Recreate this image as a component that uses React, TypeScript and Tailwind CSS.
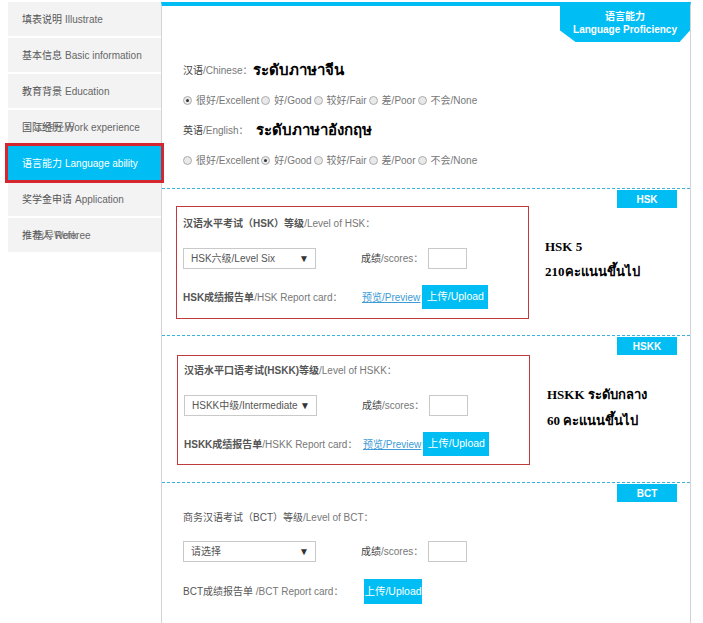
import React from "react";

const sideItems = [
  { zh: "填表说明", en: "Illustrate" },
  { zh: "基本信息", en: "Basic information" },
  { zh: "教育背景", en: "Education" },
  { zh: "国际经历", en: "Work experience", ghost: "工作经历" },
  { zh: "语言能力", en: "Language ability", active: true },
  { zh: "奖学金申请", en: "Application" },
  { zh: "推荐人", en: "Referee", ghost: "指导Work" },
];

const levels = ["很好/Excellent", "好/Good", "较好/Fair", "差/Poor", "不会/None"];

function Radio({ checked }: { checked?: boolean }) {
  return (
    <span className="inline-flex w-[9px] h-[9px] shrink-0 rounded-full border border-[#acacac] bg-[#e9e9e9] items-center justify-center">
      {checked && <span className="w-[3px] h-[3px] rounded-full bg-[#333]" />}
    </span>
  );
}

function LevelRow({ picked }: { picked: number }) {
  return (
    <div className="h-[30px] flex items-center text-[10px] text-[#777]">
      {levels.map((l, i) => (
        <span key={l} className="inline-flex items-center">
          <Radio checked={i === picked} />
          <span className="ml-[4px] mr-[2px]">{l}</span>
        </span>
      ))}
    </div>
  );
}

function Badge({ text }: { text: string }) {
  return (
    <div className="absolute top-[1px] right-[13px] w-[60px] h-[18px] bg-[#00bef4] text-white text-[10px] font-bold flex items-center justify-center">
      {text}
    </div>
  );
}

function Select({ text }: { text: string }) {
  return (
    <div className="w-[133px] h-[21px] border border-[#c9c9c9] bg-white flex items-center justify-between pl-[7px] pr-[6px] text-[10px] text-[#555]">
      <span>{text}</span>
      <span className="text-[10px] text-[#333]">▼</span>
    </div>
  );
}

function ScoreRow({ select }: { select: string }) {
  return (
    <div className="h-[21px] flex items-center">
      <Select text={select} />
      <span className="ml-[45px] w-[67px] text-[10px] text-[#777]">
        <span className="text-[#444]">成绩</span>/scores：
      </span>
      <div className="w-[39px] h-[21px] border border-[#c9c9c9] bg-white" />
    </div>
  );
}

function UploadBtn({ w }: { w: string }) {
  return (
    <div className={`${w} bg-[#00bef4] text-white text-[10.5px] flex items-center justify-center`}>上传/Upload</div>
  );
}

function ExamBox({
  title,
  select,
  report,
  pad,
}: {
  title: React.ReactNode;
  select: string;
  report: React.ReactNode;
  pad: string;
}) {
  return (
    <div className={`w-[353px] border border-[#bf3b40] pl-[6px] ${pad}`}>
      <div className="h-[20px] flex items-center text-[10px] text-[#777]">{title}</div>
      <div className="mt-[15px]">
        <ScoreRow select={select} />
      </div>
      <div className="mt-[16px] h-[24px] flex items-center">
        <span className="w-[179px] text-[10px] text-[#777]">{report}</span>
        <span className="text-[10px] text-[#3d9bd6] underline">预览/Preview</span>
        <span className="ml-[2px] h-[24px] flex">
          <UploadBtn w="w-[66px] h-[24px]" />
        </span>
      </div>
    </div>
  );
}

export default function App() {
  return (
    <div className="w-[703px] h-[623px] overflow-hidden bg-white pt-[2px] pl-[8px] flex items-start font-['Liberation_Sans','Noto_Sans_CJK_SC',sans-serif]">
      {/* sidebar */}
      <div className="w-[153px] flex flex-col gap-[2px] shrink-0">
        {sideItems.map((it) => (
          <div
            key={it.en}
            className={
              it.active
                ? "h-[34px] flex items-center pl-[14px] bg-[#00bef4] text-white text-[10px] outline outline-[3px] outline-[#d5262f] relative z-10"
                : "h-[34px] flex items-center pl-[14px] bg-[#f3f3f3] text-[10px] text-[#666] relative"
            }
          >
            <span className={it.active ? "" : "text-[#555]"}>{it.zh}</span>
            <span className="ml-[3px]">{it.en}</span>
            {it.ghost && (
              <span className="absolute left-[26px] top-[10px] text-[10px] text-[#666] opacity-80">{it.ghost}</span>
            )}
          </div>
        ))}
      </div>

      {/* main panel */}
      <div className="w-[530px] shrink-0 border-l border-r border-[#d3d3d3] border-t-4 border-t-[#00bef4] pb-[60px]">
        {/* section 1 */}
        <div className="h-[182px]">
          <div className="flex justify-end">
            <div className="w-[130px] h-[36px] bg-[#00bef4] text-white font-bold text-[10px] leading-[13px] flex flex-col items-center justify-center pb-[3px] [clip-path:polygon(0_0,100%_0,100%_68%,92%_100%,12%_100%,0_68%)]">
              <span>语言能力</span>
              <span>Language Proficiency</span>
            </div>
          </div>
          <div className="pl-[21px] mt-[13px]">
            <div className="h-[30px] flex items-center">
              <span className="text-[10px] text-[#777]">
                <span className="text-[#444]">汉语</span>/Chinese：
              </span>
              <span className="ml-[1px] text-[15px] font-bold text-black font-['Liberation_Serif',serif]">ระดับภาษาจีน</span>
            </div>
            <LevelRow picked={0} />
            <div className="h-[30px] flex items-center">
              <span className="text-[10px] text-[#777]">
                <span className="text-[#444]">英语</span>/English：
              </span>
              <span className="ml-[7px] text-[15px] font-bold text-black font-['Liberation_Serif',serif]">ระดับภาษาอังกฤษ</span>
            </div>
            <LevelRow picked={1} />
          </div>
        </div>

        {/* HSK */}
        <div className="relative h-[147px] border-t border-dashed border-[#3ab2dc] flex items-start">
          <Badge text="HSK" />
          <div className="mt-[17px] ml-[14px]">
            <ExamBox
              pad="pt-[6px] pb-[9px]"
              select="HSK六级/Level Six"
              title={
                <>
                  <span className="font-bold text-[#555]">汉语水平考试（HSK）等级</span>/Level of HSK：
                </>
              }
              report={
                <>
                  <span className="font-bold text-[#555]">HSK成绩报告单</span>/HSK Report card：
                </>
              }
            />
          </div>
          <div className="ml-[16px] mt-[45px] text-[13px] leading-[25px] font-bold text-black font-['Liberation_Serif',serif]">
            <div>HSK 5</div>
            <div>210คะแนนขึ้นไป</div>
          </div>
        </div>

        {/* HSKK */}
        <div className="relative h-[147px] border-t border-dashed border-[#3ab2dc] flex items-start">
          <Badge text="HSKK" />
          <div className="mt-[19px] ml-[15px]">
            <ExamBox
              pad="pt-[4px] pb-[8px]"
              select="HSKK中级/Intermediate"
              title={
                <>
                  <span className="font-bold text-[#555]">汉语水平口语考试(HSKK)等级</span>/Level of HSKK：
                </>
              }
              report={
                <>
                  <span className="font-bold text-[#555]">HSKK成绩报告单</span>/HSKK Report card：
                </>
              }
            />
          </div>
          <div className="ml-[17px] mt-[46px] text-[13px] leading-[26px] font-bold text-black font-['Liberation_Serif',serif]">
            <div>HSKK ระดับกลาง</div>
            <div>60 คะแนนขึ้นไป</div>
          </div>
        </div>

        {/* BCT */}
        <div className="relative border-t border-dashed border-[#3ab2dc] pl-[21px]">
          <Badge text="BCT" />
          <div className="pt-[24px] h-[44px] flex items-end">
            <div className="h-[20px] flex items-center text-[10px] text-[#777]">
              <span className="text-[#555]">商务汉语考试（BCT）等级</span>/Level of BCT：
            </div>
          </div>
          <div className="mt-[14px]">
            <ScoreRow select="请选择" />
          </div>
          <div className="mt-[17px] h-[25px] flex items-center">
            <span className="w-[181px] text-[10px] text-[#777]">
              <span className="text-[#555]">BCT成绩报告单</span> /BCT Report card：
            </span>
            <span className="h-[25px] flex">
              <UploadBtn w="w-[58px] h-[25px]" />
            </span>
          </div>
        </div>
      </div>
    </div>
  );
}
